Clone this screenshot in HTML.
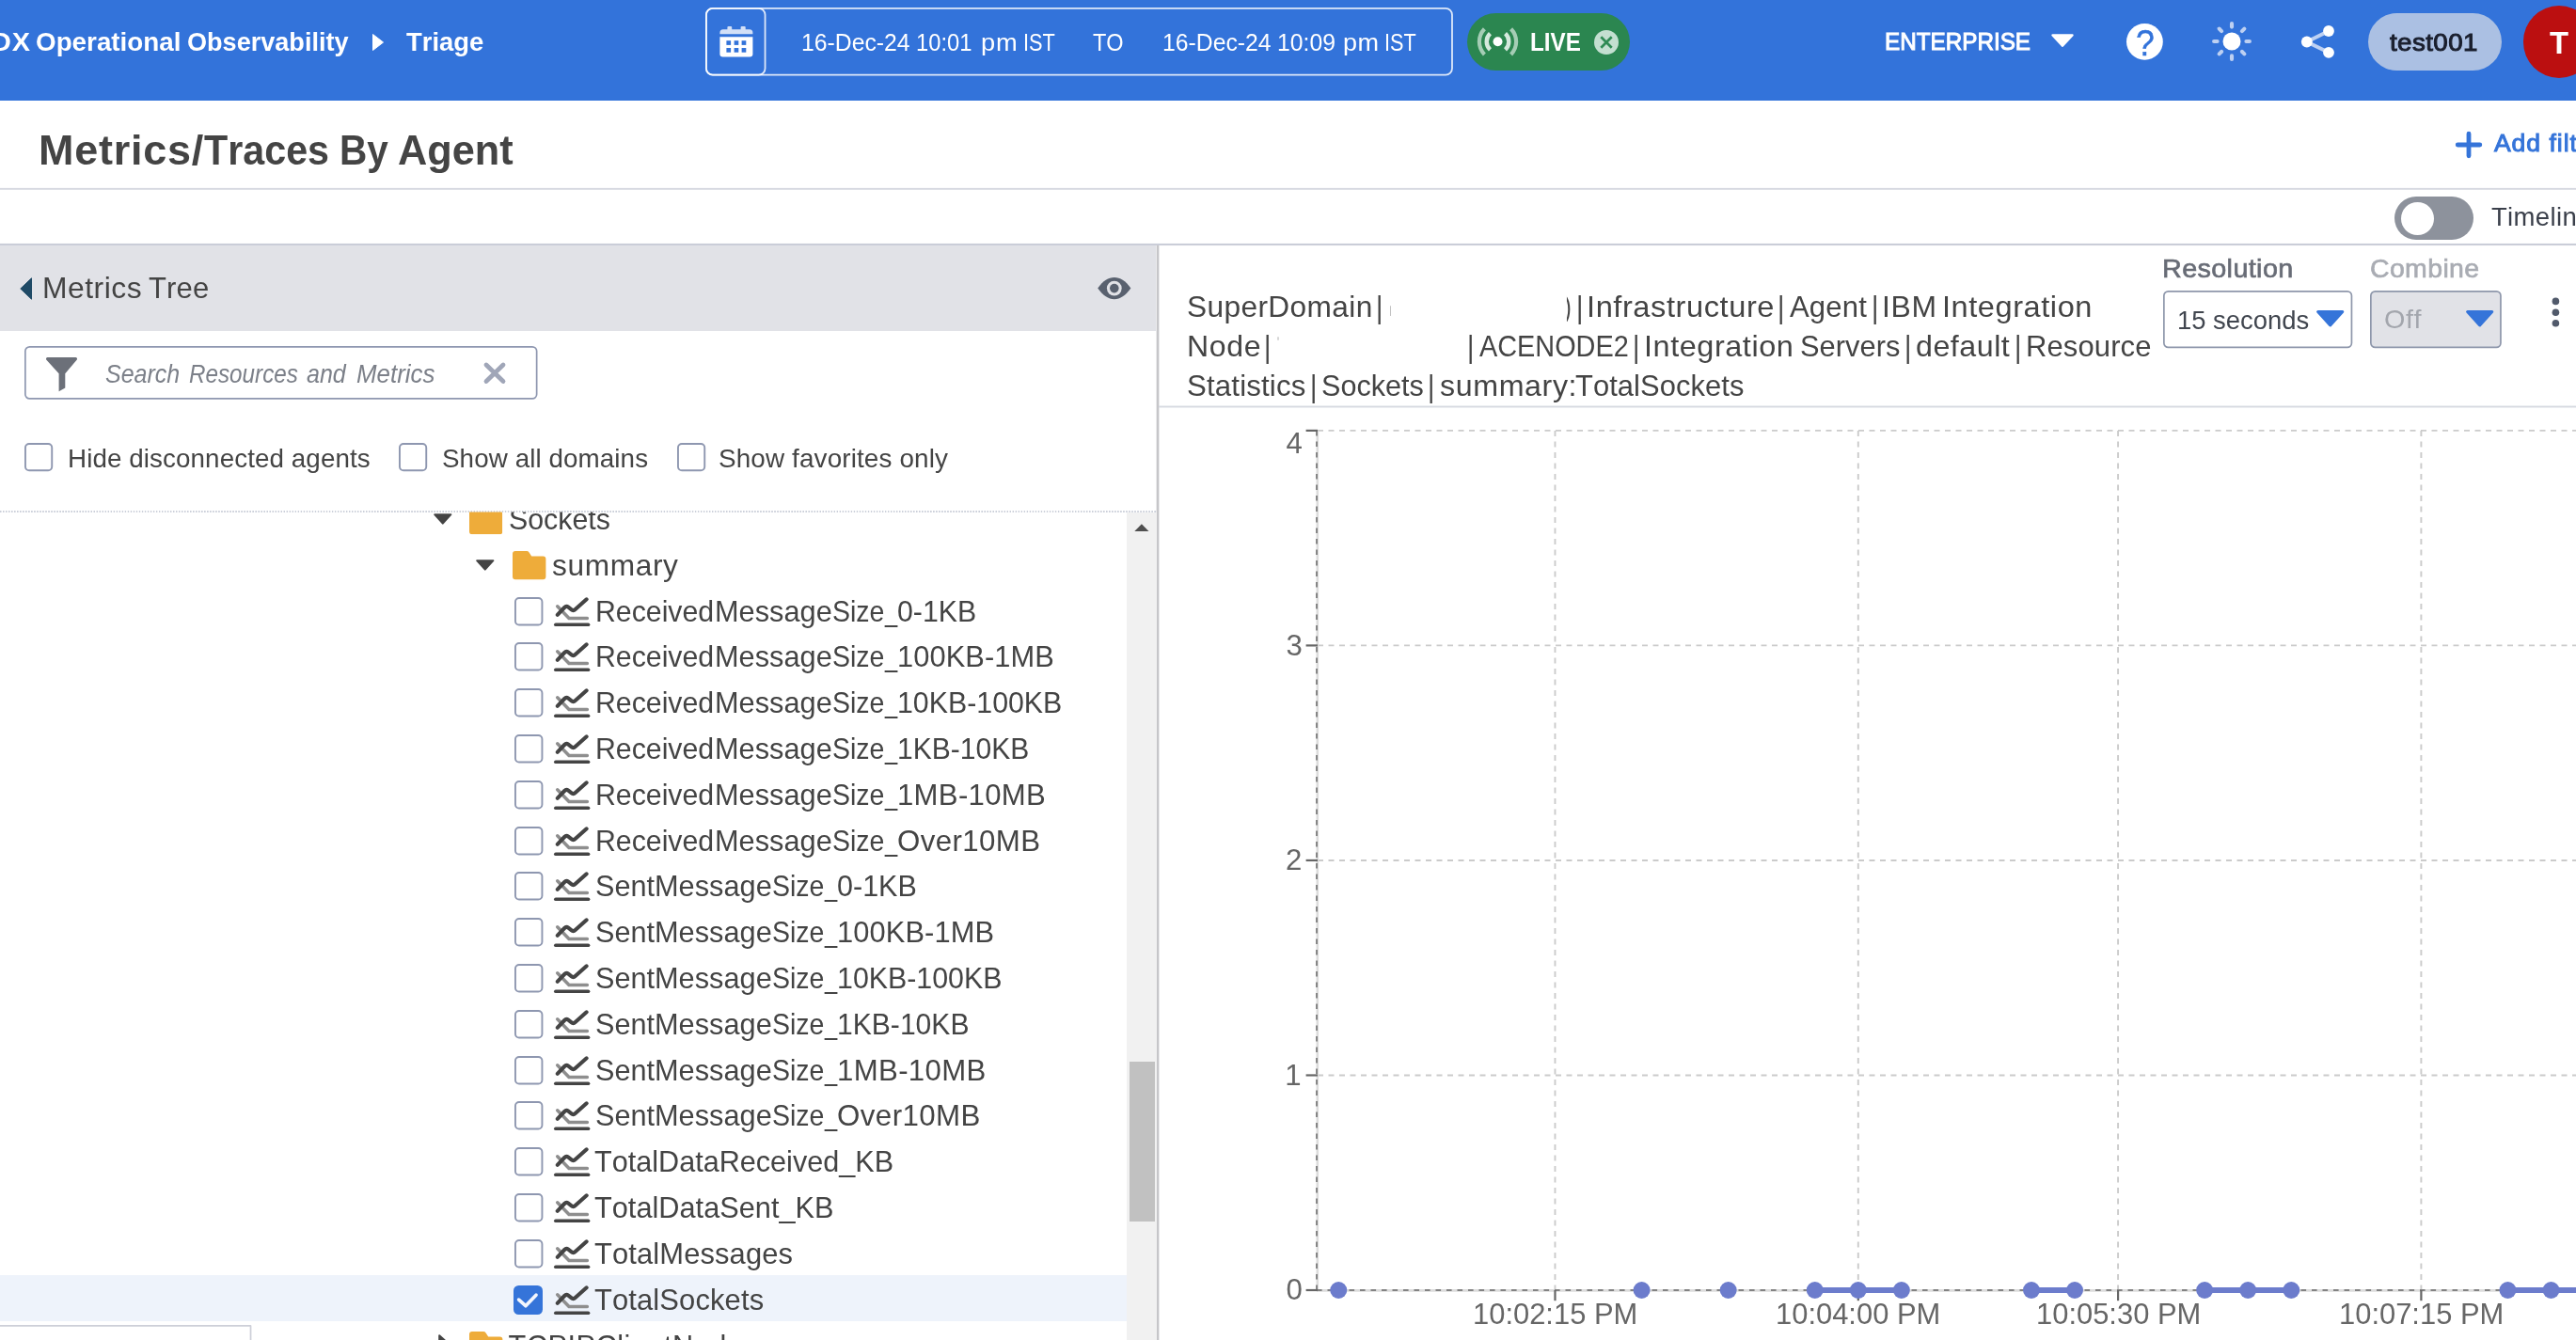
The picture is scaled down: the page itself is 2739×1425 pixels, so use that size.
<!DOCTYPE html>
<html><head><meta charset="utf-8"><title>Metrics/Traces By Agent</title>
<style>
html,body{margin:0;padding:0;background:#fff;}
body{width:2739px;height:1425px;overflow:hidden;font-family:"Liberation Sans",sans-serif;font-kerning:none;}
#root{will-change:transform;position:relative;width:2739px;height:1425px;overflow:hidden;background:#fff;}
.t{position:absolute;white-space:pre;line-height:1;transform-origin:0 0;}
svg{overflow:visible;}

</style></head>
<body>
<div id="root">
<div style="position:absolute;left:0px;top:0px;width:2739px;height:107.3px;background:#3373da;"></div>
<svg style="position:absolute;left:396px;top:36px;" width="12" height="18" viewBox="0 0 12 18"><path d="M0.5 0.5 L11.5 9 L0.5 17.5 Z" fill="#fff" stroke="#fff" stroke-width="1" stroke-linejoin="round"/></svg>
<svg style="position:absolute;left:750.1px;top:8.0px;" width="794.90" height="72.50" viewBox="0 0 794.90 72.50"><rect x="0.90" y="0.90" width="793.10" height="70.70" rx="6.90" fill="none" stroke="rgba(255,255,255,.84)" stroke-width="1.8"/></svg>
<svg style="position:absolute;left:750.1px;top:8.0px;" width="64.45" height="72.50" viewBox="0 0 64.45 72.50"><rect x="0.90" y="0.90" width="62.65" height="70.70" rx="6.90" fill="none" stroke="rgba(255,255,255,.84)" stroke-width="1.8"/></svg>
<svg style="position:absolute;left:764.5px;top:28px;" width="35.5" height="33" viewBox="0 0 35.5 33"><path d="M0.4 8.3 V6.8 a3.5 3.5 0 0 1 3.5 -3.5 H31.9 a3.5 3.5 0 0 1 3.5 3.5 V8.3 Z" fill="#d3e0f7"/><rect x="8.4" y="0" width="4.8" height="5.5" rx="1.1" fill="#d3e0f7"/><rect x="22.6" y="0" width="5.1" height="5.5" rx="1.1" fill="#d3e0f7"/><path d="M0.4 11.3 H35.4 V29.3 a3.2 3.2 0 0 1 -3.2 3.2 H3.6 a3.2 3.2 0 0 1 -3.2 -3.2 Z" fill="#fff"/><rect x="7.4" y="15.2" width="4.7" height="4.7" fill="#3373da"/><rect x="7.4" y="23.0" width="4.7" height="4.7" fill="#3373da"/><rect x="15.6" y="15.2" width="4.7" height="4.7" fill="#3373da"/><rect x="15.6" y="23.0" width="4.7" height="4.7" fill="#3373da"/><rect x="23.6" y="15.2" width="4.7" height="4.7" fill="#3373da"/><rect x="23.6" y="23.0" width="4.7" height="4.7" fill="#3373da"/></svg>
<div style="position:absolute;left:1560px;top:14px;width:173px;height:61px;background:#2b8650;border-radius:31px;"></div>
<svg style="position:absolute;left:1570px;top:23px;" width="45" height="44" viewBox="0 0 45 44"><circle cx="22.5" cy="21.3" r="5" fill="#fff"/><path d="M14.45 29.93 A11.8 11.8 0 0 1 14.45 12.67" fill="none" stroke="#d5e9dd" stroke-width="4.4"/><path d="M30.55 12.67 A11.8 11.8 0 0 1 30.55 29.93" fill="none" stroke="#d5e9dd" stroke-width="4.4"/><path d="M8.40 34.92 A19.6 19.6 0 0 1 8.40 7.68" fill="none" stroke="#a5cdb5" stroke-width="4.2"/><path d="M36.60 7.68 A19.6 19.6 0 0 1 36.60 34.92" fill="none" stroke="#a5cdb5" stroke-width="4.2"/></svg>
<svg style="position:absolute;left:1695px;top:32px;" width="26" height="26" viewBox="0 0 26 26"><circle cx="13" cy="13" r="13" fill="#c3dfd0"/><path d="M7.3 7.3 L18.7 18.7 M18.7 7.3 L7.3 18.7" stroke="#2e8a54" stroke-width="2.7"/></svg>
<svg style="position:absolute;left:2180.6px;top:36.2px;" width="24" height="14" viewBox="0 0 24 14"><path d="M1.5 1.5 H22.5 L12 12.8 Z" fill="#fff" stroke="#fff" stroke-width="2.4" stroke-linejoin="round"/></svg>
<svg style="position:absolute;left:2261.45px;top:25.2px;" width="38.8" height="38.8" viewBox="0 0 38.8 38.8"><circle cx="19.4" cy="19.4" r="19.4" fill="#fff"/></svg>
<svg style="position:absolute;left:2350.5px;top:22.3px;" width="44" height="44" viewBox="0 0 44 44"><circle cx="22" cy="22" r="9.5" fill="#fff"/><line x1="37.40" y1="22.00" x2="40.90" y2="22.00" stroke="#bdd0f2" stroke-width="4.1" stroke-linecap="round"/><line x1="32.89" y1="32.89" x2="35.36" y2="35.36" stroke="#bdd0f2" stroke-width="4.1" stroke-linecap="round"/><line x1="22.00" y1="37.40" x2="22.00" y2="40.90" stroke="#bdd0f2" stroke-width="4.1" stroke-linecap="round"/><line x1="11.11" y1="32.89" x2="8.64" y2="35.36" stroke="#bdd0f2" stroke-width="4.1" stroke-linecap="round"/><line x1="6.60" y1="22.00" x2="3.10" y2="22.00" stroke="#bdd0f2" stroke-width="4.1" stroke-linecap="round"/><line x1="11.11" y1="11.11" x2="8.64" y2="8.64" stroke="#bdd0f2" stroke-width="4.1" stroke-linecap="round"/><line x1="22.00" y1="6.60" x2="22.00" y2="3.10" stroke="#bdd0f2" stroke-width="4.1" stroke-linecap="round"/><line x1="32.89" y1="11.11" x2="35.36" y2="8.64" stroke="#bdd0f2" stroke-width="4.1" stroke-linecap="round"/></svg>
<svg style="position:absolute;left:2440px;top:22px;" width="48" height="46" viewBox="0 0 48 46"><path d="M36 11 L12.8 22.5 L36 33.8" fill="none" stroke="#bdd0f2" stroke-width="4" stroke-linejoin="round"/><circle cx="12.8" cy="22.5" r="5.9" fill="#fff"/><circle cx="36" cy="11" r="5.9" fill="#fff"/><circle cx="36" cy="33.8" r="5.9" fill="#fff"/></svg>
<div style="position:absolute;left:2518px;top:14px;width:142px;height:61px;background:#abc0e3;border-radius:31px;"></div>
<div style="position:absolute;left:2682.6px;top:6px;width:76.80000000000018px;height:76.8px;background:#bb0f10;border-radius:50%;"></div>
<svg style="position:absolute;left:2611px;top:140px;" width="28" height="28" viewBox="0 0 28 28"><path d="M14 2.2 V25.8 M2.2 14 H25.8" stroke="#3574d9" stroke-width="4.8" stroke-linecap="round"/></svg>
<svg style="position:absolute;left:0px;top:198px;" width="2739.00" height="5" viewBox="0 198 2739.00 5"><rect x="0" y="199.90" width="2739.00" height="1.9" fill="#d6d9e1"/></svg>
<div style="position:absolute;left:2545.5px;top:209.3px;width:84.5px;height:45.69999999999999px;background:#8d929c;border-radius:23px;"></div>
<div style="position:absolute;left:2553.4px;top:215.2px;width:34.79999999999973px;height:34.80000000000001px;background:#fff;border-radius:50%;"></div>
<svg style="position:absolute;left:0px;top:257px;" width="2739.00" height="6" viewBox="0 257 2739.00 6"><rect x="0" y="258.95" width="2739.00" height="2.1" fill="#cacdd8"/></svg>
<div style="position:absolute;left:0px;top:261px;width:1229.4px;height:91px;background:#e1e2e7;"></div>
<svg style="position:absolute;left:1228px;top:261px;" width="6" height="1164.00" viewBox="1228 0 6 1164.00"><rect x="1229.65" y="0" width="2.7" height="1164.00" fill="#c6c6c9"/></svg>
<svg style="position:absolute;left:21px;top:295px;" width="13" height="24" viewBox="0 0 13 24"><path d="M12.5 0.8 V23.2 L0.8 12 Z" fill="#1f4a66" stroke="#1f4a66" stroke-width="1" stroke-linejoin="round"/></svg>
<svg style="position:absolute;left:1166.5px;top:295px;" width="35.6" height="23.2" viewBox="0 0 35.6 23.2"><path d="M0.2 11.6 C6 3.5 11.5 0 17.8 0 C24.1 0 29.6 3.5 35.4 11.6 C29.6 19.7 24.1 23.2 17.8 23.2 C11.5 23.2 6 19.7 0.2 11.6 Z" fill="#59616f"/><circle cx="17.8" cy="11.6" r="7.9" fill="#e1e2e7"/><circle cx="17.8" cy="11.6" r="4.8" fill="#59616f"/></svg>
<svg style="position:absolute;left:26.25px;top:368.25px;" width="545.50" height="56.75" viewBox="0 0 545.50 56.75"><rect x="0.85" y="0.85" width="543.80" height="55.05" rx="4.65" fill="#fff" stroke="#8e97b0" stroke-width="1.7"/></svg>
<svg style="position:absolute;left:48.75px;top:379.5px;" width="33" height="36.3" viewBox="0 0 33 36.3"><path d="M1.6 0 H31.4 a1.6 1.6 0 0 1 1.2 2.7 L20.3 17.2 V32.6 L13.6 36.3 V17.2 L0.4 2.7 A1.6 1.6 0 0 1 1.6 0 Z" fill="#6c7079"/></svg>
<svg style="position:absolute;left:515px;top:386.25px;" width="22" height="21.5" viewBox="0 0 22 21.5"><path d="M2 2 L20 19.5 M20 2 L2 19.5" stroke="#a0a6b8" stroke-width="4.8" stroke-linecap="round"/></svg>
<svg style="position:absolute;left:26.25px;top:471.4px;" width="30.20" height="30.20" viewBox="0 0 30.20 30.20"><rect x="0.95" y="0.95" width="28.30" height="28.30" rx="4.05" fill="#fff" stroke="#8e97b0" stroke-width="1.9"/></svg>
<svg style="position:absolute;left:424.25px;top:471.4px;" width="30.20" height="30.20" viewBox="0 0 30.20 30.20"><rect x="0.95" y="0.95" width="28.30" height="28.30" rx="4.05" fill="#fff" stroke="#8e97b0" stroke-width="1.9"/></svg>
<svg style="position:absolute;left:720px;top:471.4px;" width="30.20" height="30.20" viewBox="0 0 30.20 30.20"><rect x="0.95" y="0.95" width="28.30" height="28.30" rx="4.05" fill="#fff" stroke="#8e97b0" stroke-width="1.9"/></svg>
<div style="position:absolute;left:0px;top:543px;width:1229.5px;height:2px;background-image:linear-gradient(90deg,#ccd0da 48%,transparent 48%);background-size:3.03px 2px;"></div>
<svg style="position:absolute;left:461px;top:546.3000000000001px;" width="19.6" height="11.8" viewBox="0 0 19.6 11.8"><path d="M1.2 1.2 H18.4 L9.8 10.6 Z" fill="#444" stroke="#444" stroke-width="2" stroke-linejoin="round"/></svg>
<svg style="position:absolute;left:498.8px;top:538.1px;clip-path:inset(6.5px 0 0 0);" width="35.4" height="30.2" viewBox="0 0 35.4 30.2"><path d="M3 0 H15 Q16.6 0 17.6 1.5 L20.2 5.6 H32.4 Q35.4 5.6 35.4 8.6 V27.2 Q35.4 30.2 32.4 30.2 H3 Q0 30.2 0 27.2 V3 Q0 0 3 0 Z" fill="#eeac3a"/></svg>
<svg style="position:absolute;left:506.2px;top:595.1px;" width="19.6" height="11.8" viewBox="0 0 19.6 11.8"><path d="M1.2 1.2 H18.4 L9.8 10.6 Z" fill="#444" stroke="#444" stroke-width="2" stroke-linejoin="round"/></svg>
<svg style="position:absolute;left:544.5px;top:586.0px;" width="35.4" height="30.2" viewBox="0 0 35.4 30.2"><path d="M3 0 H15 Q16.6 0 17.6 1.5 L20.2 5.6 H32.4 Q35.4 5.6 35.4 8.6 V27.2 Q35.4 30.2 32.4 30.2 H3 Q0 30.2 0 27.2 V3 Q0 0 3 0 Z" fill="#eeac3a"/></svg>
<svg style="position:absolute;left:546.6px;top:634.6px;" width="30.40" height="30.40" viewBox="0 0 30.40 30.40"><rect x="0.95" y="0.95" width="28.50" height="28.50" rx="4.05" fill="#fff" stroke="#8e97b0" stroke-width="1.9"/></svg>
<svg style="position:absolute;left:588.9px;top:634.6px;" width="38.4" height="32" viewBox="0 0 38.4 32"><path d="M1.9 29.25 H36.5" stroke="#444" stroke-width="3.7" stroke-linecap="round" fill="none"/><path d="M3.7 9.8 L16 22.5 H35.4" stroke="#8e8e8e" stroke-width="3.5" stroke-linecap="round" stroke-linejoin="round" fill="none"/><path d="M3.7 18.8 L11.2 11 Q13.1 9 15.3 10.7 L18.4 13.2 Q20.6 15 22.7 13.1 L34.7 2.3" stroke="#444" stroke-width="4.1" stroke-linecap="round" stroke-linejoin="round" fill="none"/></svg>
<svg style="position:absolute;left:546.6px;top:683.4px;" width="30.40" height="30.40" viewBox="0 0 30.40 30.40"><rect x="0.95" y="0.95" width="28.50" height="28.50" rx="4.05" fill="#fff" stroke="#8e97b0" stroke-width="1.9"/></svg>
<svg style="position:absolute;left:588.9px;top:683.4px;" width="38.4" height="32" viewBox="0 0 38.4 32"><path d="M1.9 29.25 H36.5" stroke="#444" stroke-width="3.7" stroke-linecap="round" fill="none"/><path d="M3.7 9.8 L16 22.5 H35.4" stroke="#8e8e8e" stroke-width="3.5" stroke-linecap="round" stroke-linejoin="round" fill="none"/><path d="M3.7 18.8 L11.2 11 Q13.1 9 15.3 10.7 L18.4 13.2 Q20.6 15 22.7 13.1 L34.7 2.3" stroke="#444" stroke-width="4.1" stroke-linecap="round" stroke-linejoin="round" fill="none"/></svg>
<svg style="position:absolute;left:546.6px;top:732.1999999999999px;" width="30.40" height="30.40" viewBox="0 0 30.40 30.40"><rect x="0.95" y="0.95" width="28.50" height="28.50" rx="4.05" fill="#fff" stroke="#8e97b0" stroke-width="1.9"/></svg>
<svg style="position:absolute;left:588.9px;top:732.1999999999999px;" width="38.4" height="32" viewBox="0 0 38.4 32"><path d="M1.9 29.25 H36.5" stroke="#444" stroke-width="3.7" stroke-linecap="round" fill="none"/><path d="M3.7 9.8 L16 22.5 H35.4" stroke="#8e8e8e" stroke-width="3.5" stroke-linecap="round" stroke-linejoin="round" fill="none"/><path d="M3.7 18.8 L11.2 11 Q13.1 9 15.3 10.7 L18.4 13.2 Q20.6 15 22.7 13.1 L34.7 2.3" stroke="#444" stroke-width="4.1" stroke-linecap="round" stroke-linejoin="round" fill="none"/></svg>
<svg style="position:absolute;left:546.6px;top:781.0px;" width="30.40" height="30.40" viewBox="0 0 30.40 30.40"><rect x="0.95" y="0.95" width="28.50" height="28.50" rx="4.05" fill="#fff" stroke="#8e97b0" stroke-width="1.9"/></svg>
<svg style="position:absolute;left:588.9px;top:781.0px;" width="38.4" height="32" viewBox="0 0 38.4 32"><path d="M1.9 29.25 H36.5" stroke="#444" stroke-width="3.7" stroke-linecap="round" fill="none"/><path d="M3.7 9.8 L16 22.5 H35.4" stroke="#8e8e8e" stroke-width="3.5" stroke-linecap="round" stroke-linejoin="round" fill="none"/><path d="M3.7 18.8 L11.2 11 Q13.1 9 15.3 10.7 L18.4 13.2 Q20.6 15 22.7 13.1 L34.7 2.3" stroke="#444" stroke-width="4.1" stroke-linecap="round" stroke-linejoin="round" fill="none"/></svg>
<svg style="position:absolute;left:546.6px;top:829.8px;" width="30.40" height="30.40" viewBox="0 0 30.40 30.40"><rect x="0.95" y="0.95" width="28.50" height="28.50" rx="4.05" fill="#fff" stroke="#8e97b0" stroke-width="1.9"/></svg>
<svg style="position:absolute;left:588.9px;top:829.8px;" width="38.4" height="32" viewBox="0 0 38.4 32"><path d="M1.9 29.25 H36.5" stroke="#444" stroke-width="3.7" stroke-linecap="round" fill="none"/><path d="M3.7 9.8 L16 22.5 H35.4" stroke="#8e8e8e" stroke-width="3.5" stroke-linecap="round" stroke-linejoin="round" fill="none"/><path d="M3.7 18.8 L11.2 11 Q13.1 9 15.3 10.7 L18.4 13.2 Q20.6 15 22.7 13.1 L34.7 2.3" stroke="#444" stroke-width="4.1" stroke-linecap="round" stroke-linejoin="round" fill="none"/></svg>
<svg style="position:absolute;left:546.6px;top:878.6px;" width="30.40" height="30.40" viewBox="0 0 30.40 30.40"><rect x="0.95" y="0.95" width="28.50" height="28.50" rx="4.05" fill="#fff" stroke="#8e97b0" stroke-width="1.9"/></svg>
<svg style="position:absolute;left:588.9px;top:878.6px;" width="38.4" height="32" viewBox="0 0 38.4 32"><path d="M1.9 29.25 H36.5" stroke="#444" stroke-width="3.7" stroke-linecap="round" fill="none"/><path d="M3.7 9.8 L16 22.5 H35.4" stroke="#8e8e8e" stroke-width="3.5" stroke-linecap="round" stroke-linejoin="round" fill="none"/><path d="M3.7 18.8 L11.2 11 Q13.1 9 15.3 10.7 L18.4 13.2 Q20.6 15 22.7 13.1 L34.7 2.3" stroke="#444" stroke-width="4.1" stroke-linecap="round" stroke-linejoin="round" fill="none"/></svg>
<svg style="position:absolute;left:546.6px;top:927.4px;" width="30.40" height="30.40" viewBox="0 0 30.40 30.40"><rect x="0.95" y="0.95" width="28.50" height="28.50" rx="4.05" fill="#fff" stroke="#8e97b0" stroke-width="1.9"/></svg>
<svg style="position:absolute;left:588.9px;top:927.4px;" width="38.4" height="32" viewBox="0 0 38.4 32"><path d="M1.9 29.25 H36.5" stroke="#444" stroke-width="3.7" stroke-linecap="round" fill="none"/><path d="M3.7 9.8 L16 22.5 H35.4" stroke="#8e8e8e" stroke-width="3.5" stroke-linecap="round" stroke-linejoin="round" fill="none"/><path d="M3.7 18.8 L11.2 11 Q13.1 9 15.3 10.7 L18.4 13.2 Q20.6 15 22.7 13.1 L34.7 2.3" stroke="#444" stroke-width="4.1" stroke-linecap="round" stroke-linejoin="round" fill="none"/></svg>
<svg style="position:absolute;left:546.6px;top:976.1999999999999px;" width="30.40" height="30.40" viewBox="0 0 30.40 30.40"><rect x="0.95" y="0.95" width="28.50" height="28.50" rx="4.05" fill="#fff" stroke="#8e97b0" stroke-width="1.9"/></svg>
<svg style="position:absolute;left:588.9px;top:976.1999999999999px;" width="38.4" height="32" viewBox="0 0 38.4 32"><path d="M1.9 29.25 H36.5" stroke="#444" stroke-width="3.7" stroke-linecap="round" fill="none"/><path d="M3.7 9.8 L16 22.5 H35.4" stroke="#8e8e8e" stroke-width="3.5" stroke-linecap="round" stroke-linejoin="round" fill="none"/><path d="M3.7 18.8 L11.2 11 Q13.1 9 15.3 10.7 L18.4 13.2 Q20.6 15 22.7 13.1 L34.7 2.3" stroke="#444" stroke-width="4.1" stroke-linecap="round" stroke-linejoin="round" fill="none"/></svg>
<svg style="position:absolute;left:546.6px;top:1025.0px;" width="30.40" height="30.40" viewBox="0 0 30.40 30.40"><rect x="0.95" y="0.95" width="28.50" height="28.50" rx="4.05" fill="#fff" stroke="#8e97b0" stroke-width="1.9"/></svg>
<svg style="position:absolute;left:588.9px;top:1025.0px;" width="38.4" height="32" viewBox="0 0 38.4 32"><path d="M1.9 29.25 H36.5" stroke="#444" stroke-width="3.7" stroke-linecap="round" fill="none"/><path d="M3.7 9.8 L16 22.5 H35.4" stroke="#8e8e8e" stroke-width="3.5" stroke-linecap="round" stroke-linejoin="round" fill="none"/><path d="M3.7 18.8 L11.2 11 Q13.1 9 15.3 10.7 L18.4 13.2 Q20.6 15 22.7 13.1 L34.7 2.3" stroke="#444" stroke-width="4.1" stroke-linecap="round" stroke-linejoin="round" fill="none"/></svg>
<svg style="position:absolute;left:546.6px;top:1073.8000000000002px;" width="30.40" height="30.40" viewBox="0 0 30.40 30.40"><rect x="0.95" y="0.95" width="28.50" height="28.50" rx="4.05" fill="#fff" stroke="#8e97b0" stroke-width="1.9"/></svg>
<svg style="position:absolute;left:588.9px;top:1073.8000000000002px;" width="38.4" height="32" viewBox="0 0 38.4 32"><path d="M1.9 29.25 H36.5" stroke="#444" stroke-width="3.7" stroke-linecap="round" fill="none"/><path d="M3.7 9.8 L16 22.5 H35.4" stroke="#8e8e8e" stroke-width="3.5" stroke-linecap="round" stroke-linejoin="round" fill="none"/><path d="M3.7 18.8 L11.2 11 Q13.1 9 15.3 10.7 L18.4 13.2 Q20.6 15 22.7 13.1 L34.7 2.3" stroke="#444" stroke-width="4.1" stroke-linecap="round" stroke-linejoin="round" fill="none"/></svg>
<svg style="position:absolute;left:546.6px;top:1122.6px;" width="30.40" height="30.40" viewBox="0 0 30.40 30.40"><rect x="0.95" y="0.95" width="28.50" height="28.50" rx="4.05" fill="#fff" stroke="#8e97b0" stroke-width="1.9"/></svg>
<svg style="position:absolute;left:588.9px;top:1122.6px;" width="38.4" height="32" viewBox="0 0 38.4 32"><path d="M1.9 29.25 H36.5" stroke="#444" stroke-width="3.7" stroke-linecap="round" fill="none"/><path d="M3.7 9.8 L16 22.5 H35.4" stroke="#8e8e8e" stroke-width="3.5" stroke-linecap="round" stroke-linejoin="round" fill="none"/><path d="M3.7 18.8 L11.2 11 Q13.1 9 15.3 10.7 L18.4 13.2 Q20.6 15 22.7 13.1 L34.7 2.3" stroke="#444" stroke-width="4.1" stroke-linecap="round" stroke-linejoin="round" fill="none"/></svg>
<svg style="position:absolute;left:546.6px;top:1171.4px;" width="30.40" height="30.40" viewBox="0 0 30.40 30.40"><rect x="0.95" y="0.95" width="28.50" height="28.50" rx="4.05" fill="#fff" stroke="#8e97b0" stroke-width="1.9"/></svg>
<svg style="position:absolute;left:588.9px;top:1171.4px;" width="38.4" height="32" viewBox="0 0 38.4 32"><path d="M1.9 29.25 H36.5" stroke="#444" stroke-width="3.7" stroke-linecap="round" fill="none"/><path d="M3.7 9.8 L16 22.5 H35.4" stroke="#8e8e8e" stroke-width="3.5" stroke-linecap="round" stroke-linejoin="round" fill="none"/><path d="M3.7 18.8 L11.2 11 Q13.1 9 15.3 10.7 L18.4 13.2 Q20.6 15 22.7 13.1 L34.7 2.3" stroke="#444" stroke-width="4.1" stroke-linecap="round" stroke-linejoin="round" fill="none"/></svg>
<svg style="position:absolute;left:546.6px;top:1220.2px;" width="30.40" height="30.40" viewBox="0 0 30.40 30.40"><rect x="0.95" y="0.95" width="28.50" height="28.50" rx="4.05" fill="#fff" stroke="#8e97b0" stroke-width="1.9"/></svg>
<svg style="position:absolute;left:588.9px;top:1220.2px;" width="38.4" height="32" viewBox="0 0 38.4 32"><path d="M1.9 29.25 H36.5" stroke="#444" stroke-width="3.7" stroke-linecap="round" fill="none"/><path d="M3.7 9.8 L16 22.5 H35.4" stroke="#8e8e8e" stroke-width="3.5" stroke-linecap="round" stroke-linejoin="round" fill="none"/><path d="M3.7 18.8 L11.2 11 Q13.1 9 15.3 10.7 L18.4 13.2 Q20.6 15 22.7 13.1 L34.7 2.3" stroke="#444" stroke-width="4.1" stroke-linecap="round" stroke-linejoin="round" fill="none"/></svg>
<svg style="position:absolute;left:546.6px;top:1269.0px;" width="30.40" height="30.40" viewBox="0 0 30.40 30.40"><rect x="0.95" y="0.95" width="28.50" height="28.50" rx="4.05" fill="#fff" stroke="#8e97b0" stroke-width="1.9"/></svg>
<svg style="position:absolute;left:588.9px;top:1269.0px;" width="38.4" height="32" viewBox="0 0 38.4 32"><path d="M1.9 29.25 H36.5" stroke="#444" stroke-width="3.7" stroke-linecap="round" fill="none"/><path d="M3.7 9.8 L16 22.5 H35.4" stroke="#8e8e8e" stroke-width="3.5" stroke-linecap="round" stroke-linejoin="round" fill="none"/><path d="M3.7 18.8 L11.2 11 Q13.1 9 15.3 10.7 L18.4 13.2 Q20.6 15 22.7 13.1 L34.7 2.3" stroke="#444" stroke-width="4.1" stroke-linecap="round" stroke-linejoin="round" fill="none"/></svg>
<svg style="position:absolute;left:546.6px;top:1317.8000000000002px;" width="30.40" height="30.40" viewBox="0 0 30.40 30.40"><rect x="0.95" y="0.95" width="28.50" height="28.50" rx="4.05" fill="#fff" stroke="#8e97b0" stroke-width="1.9"/></svg>
<svg style="position:absolute;left:588.9px;top:1317.8000000000002px;" width="38.4" height="32" viewBox="0 0 38.4 32"><path d="M1.9 29.25 H36.5" stroke="#444" stroke-width="3.7" stroke-linecap="round" fill="none"/><path d="M3.7 9.8 L16 22.5 H35.4" stroke="#8e8e8e" stroke-width="3.5" stroke-linecap="round" stroke-linejoin="round" fill="none"/><path d="M3.7 18.8 L11.2 11 Q13.1 9 15.3 10.7 L18.4 13.2 Q20.6 15 22.7 13.1 L34.7 2.3" stroke="#444" stroke-width="4.1" stroke-linecap="round" stroke-linejoin="round" fill="none"/></svg>
<div style="position:absolute;left:0px;top:1355.8999999999999px;width:1198px;height:49.0px;background:#eef3fb;"></div>
<div style="position:absolute;left:546.4px;top:1366.6px;width:30.899999999999977px;height:31.299999999999955px;background:#3574d9;border-radius:5.5px;"></div>
<svg style="position:absolute;left:546.4px;top:1366.6px;" width="30.9" height="31.3" viewBox="0 0 30.9 31.3"><path d="M5.6 15.1 L12.9 21.7 L24 10.2" fill="none" stroke="#f3f6fd" stroke-width="3.7" stroke-linecap="round" stroke-linejoin="round"/></svg>
<svg style="position:absolute;left:588.9px;top:1366.6px;" width="38.4" height="32" viewBox="0 0 38.4 32"><path d="M1.9 29.25 H36.5" stroke="#444" stroke-width="3.7" stroke-linecap="round" fill="none"/><path d="M3.7 9.8 L16 22.5 H35.4" stroke="#8e8e8e" stroke-width="3.5" stroke-linecap="round" stroke-linejoin="round" fill="none"/><path d="M3.7 18.8 L11.2 11 Q13.1 9 15.3 10.7 L18.4 13.2 Q20.6 15 22.7 13.1 L34.7 2.3" stroke="#444" stroke-width="4.1" stroke-linecap="round" stroke-linejoin="round" fill="none"/></svg>
<svg style="position:absolute;left:465.5px;top:1418.9px;" width="11.8" height="19.6" viewBox="0 0 11.8 19.6"><path d="M1.2 1.2 V18.4 L10.6 9.8 Z" fill="#444" stroke="#444" stroke-width="2" stroke-linejoin="round"/></svg>
<svg style="position:absolute;left:498.8px;top:1415.6px;" width="35.4" height="30.2" viewBox="0 0 35.4 30.2"><path d="M3 0 H15 Q16.6 0 17.6 1.5 L20.2 5.6 H32.4 Q35.4 5.6 35.4 8.6 V27.2 Q35.4 30.2 32.4 30.2 H3 Q0 30.2 0 27.2 V3 Q0 0 3 0 Z" fill="#eeac3a"/></svg>
<div style="position:absolute;left:1198px;top:544.6px;width:31.5px;height:880.4px;background:#f1f1f1;"></div>
<svg style="position:absolute;left:1206.4px;top:556.6px;" width="15.8" height="8.4" viewBox="0 0 15.8 8.4"><path d="M7.9 0.3 L15.5 8.1 H0.3 Z" fill="#505050"/></svg>
<div style="position:absolute;left:1200.5px;top:1129px;width:27.5px;height:170px;background:#c1c1c1;"></div>
<svg style="position:absolute;left:-4px;top:1409.2px;" width="271.40" height="22.80" viewBox="0 0 271.40 22.80"><rect x="0.85" y="0.85" width="269.70" height="21.10" rx="0.15" fill="#fff" stroke="#cdcfd8" stroke-width="1.7"/></svg>
<div style="position:absolute;left:1477.5px;top:325px;width:1.7999999999999545px;height:11px;background:#999;border-radius:1px;opacity:.6;"></div>
<div style="position:absolute;left:1358px;top:358px;width:1.599999999999909px;height:4px;background:#bbb;border-radius:1px;opacity:.6;"></div>
<svg style="position:absolute;left:2300px;top:309.2px;" width="201.30" height="61.30" viewBox="0 0 201.30 61.30"><rect x="0.85" y="0.85" width="199.60" height="59.60" rx="4.65" fill="#fff" stroke="#8e97ab" stroke-width="1.7"/></svg>
<svg style="position:absolute;left:2463.4px;top:329.8px;" width="29.4" height="17.6" viewBox="0 0 29.4 17.6"><path d="M1.6 1.6 H27.8 L14.7 16 Z" fill="#3574d9" stroke="#3574d9" stroke-width="3" stroke-linejoin="round"/></svg>
<svg style="position:absolute;left:2520.3px;top:309.2px;" width="139.80" height="61.30" viewBox="0 0 139.80 61.30"><rect x="0.85" y="0.85" width="138.10" height="59.60" rx="4.65" fill="#e1e2e7" stroke="#8e97ab" stroke-width="1.7"/></svg>
<svg style="position:absolute;left:2621.9px;top:329.8px;" width="29.4" height="17.6" viewBox="0 0 29.4 17.6"><path d="M1.6 1.6 H27.8 L14.7 16 Z" fill="#3574d9" stroke="#3574d9" stroke-width="3" stroke-linejoin="round"/></svg>
<svg style="position:absolute;left:2713px;top:316px;" width="9" height="32" viewBox="0 0 9 32"><circle cx="4.4" cy="4.4" r="3.8" fill="#515a6b"/><circle cx="4.4" cy="16.2" r="3.8" fill="#515a6b"/><circle cx="4.4" cy="27.8" r="3.8" fill="#515a6b"/></svg>
<svg style="position:absolute;left:1232px;top:430px;" width="1507.00" height="5" viewBox="0 430 1507.00 5"><rect x="0" y="431.55" width="1507.00" height="1.9" fill="#d6d9e1"/></svg>
<svg style="position:absolute;left:1232px;top:433px;" width="1507" height="992" viewBox="1232 433 1507 992"><path d="M1401.0 1143.47 H2739" stroke="#cbcbcb" stroke-width="1.9" stroke-dasharray="6 5.5" fill="none"/><path d="M1401.0 914.95 H2739" stroke="#cbcbcb" stroke-width="1.9" stroke-dasharray="6 5.5" fill="none"/><path d="M1401.0 686.42 H2739" stroke="#cbcbcb" stroke-width="1.9" stroke-dasharray="6 5.5" fill="none"/><path d="M1401.0 457.90 H2739" stroke="#cbcbcb" stroke-width="1.9" stroke-dasharray="6 5.5" fill="none"/><path d="M1653.48 457.9 V1372.0" stroke="#cbcbcb" stroke-width="1.9" stroke-dasharray="6 5.5" fill="none"/><path d="M1975.80 457.9 V1372.0" stroke="#cbcbcb" stroke-width="1.9" stroke-dasharray="6 5.5" fill="none"/><path d="M2252.07 457.9 V1372.0" stroke="#cbcbcb" stroke-width="1.9" stroke-dasharray="6 5.5" fill="none"/><path d="M2574.39 457.9 V1372.0" stroke="#cbcbcb" stroke-width="1.9" stroke-dasharray="6 5.5" fill="none"/><path d="M1400.8 457.9 V1372.0" stroke="#dcdcdc" stroke-width="2.6" fill="none"/><path d="M1400.0 1372.3 H2739" stroke="#dcdcdc" stroke-width="2.8" fill="none"/><path d="M1400.0 457.9 V1372.0" stroke="#666" stroke-width="1.5" stroke-dasharray="5.6 5.9" fill="none"/><path d="M1400.0 1372.0 H2739" stroke="#666" stroke-width="1.6" stroke-dasharray="5.6 5.9" fill="none"/><path d="M1388.6 1372.00 H1401.0" stroke="#666" stroke-width="2.2" fill="none"/><path d="M1388.6 1143.47 H1401.0" stroke="#666" stroke-width="2.2" fill="none"/><path d="M1388.6 914.95 H1401.0" stroke="#666" stroke-width="2.2" fill="none"/><path d="M1388.6 686.42 H1401.0" stroke="#666" stroke-width="2.2" fill="none"/><path d="M1388.6 457.90 H1401.0" stroke="#666" stroke-width="2.2" fill="none"/><path d="M1653.48 1372.0 V1383.2" stroke="#666" stroke-width="2.2" fill="none"/><path d="M1975.80 1372.0 V1383.2" stroke="#666" stroke-width="2.2" fill="none"/><path d="M2252.07 1372.0 V1383.2" stroke="#666" stroke-width="2.2" fill="none"/><path d="M2574.39 1372.0 V1383.2" stroke="#666" stroke-width="2.2" fill="none"/><path d="M1929.75 1372.0 H2021.84" stroke="#6c7ccc" stroke-width="5.9" fill="none"/><path d="M2159.98 1372.0 H2206.02" stroke="#6c7ccc" stroke-width="5.9" fill="none"/><path d="M2344.16 1372.0 H2436.25" stroke="#6c7ccc" stroke-width="5.9" fill="none"/><path d="M2666.48 1372.0 H2835.31" stroke="#6c7ccc" stroke-width="5.9" fill="none"/><circle cx="1423.25" cy="1372.0" r="9" fill="#6c7ccc"/><circle cx="1745.57" cy="1372.0" r="9" fill="#6c7ccc"/><circle cx="1837.66" cy="1372.0" r="9" fill="#6c7ccc"/><circle cx="1929.75" cy="1372.0" r="9" fill="#6c7ccc"/><circle cx="1975.80" cy="1372.0" r="9" fill="#6c7ccc"/><circle cx="2021.84" cy="1372.0" r="9" fill="#6c7ccc"/><circle cx="2159.98" cy="1372.0" r="9" fill="#6c7ccc"/><circle cx="2206.02" cy="1372.0" r="9" fill="#6c7ccc"/><circle cx="2344.16" cy="1372.0" r="9" fill="#6c7ccc"/><circle cx="2390.21" cy="1372.0" r="9" fill="#6c7ccc"/><circle cx="2436.25" cy="1372.0" r="9" fill="#6c7ccc"/><circle cx="2666.48" cy="1372.0" r="9" fill="#6c7ccc"/><circle cx="2712.52" cy="1372.0" r="9" fill="#6c7ccc"/><circle cx="2758.57" cy="1372.0" r="9" fill="#6c7ccc"/></svg>
<span class="t" style="left:-9.33px;top:29.93px;font-size:28.2px;font-weight:bold;font-style:normal;color:#fff;letter-spacing:0.861px;transform:scaleX(1.0238);">DX</span>
<span class="t" style="left:38.46px;top:29.93px;font-size:28.2px;font-weight:bold;font-style:normal;color:#fff;transform:scaleX(0.9864);">Operational</span>
<span class="t" style="left:199.19px;top:29.93px;font-size:28.2px;font-weight:bold;font-style:normal;color:#fff;transform:scaleX(0.9605);">Observability</span>
<span class="t" style="left:432.49px;top:29.93px;font-size:28.2px;font-weight:bold;font-style:normal;color:#fff;transform:scaleX(0.9722);">Triage</span>
<span class="t" style="left:851.71px;top:32.08px;font-size:26.6px;font-weight:normal;font-style:normal;color:#fff;transform:scaleX(0.9311);">16-Dec-24</span>
<span class="t" style="left:974.09px;top:32.08px;font-size:26.6px;font-weight:normal;font-style:normal;color:#fff;transform:scaleX(0.8950);">10:01</span>
<span class="t" style="left:1042.94px;top:32.08px;font-size:26.6px;font-weight:normal;font-style:normal;color:#fff;letter-spacing:0.836px;transform:scaleX(1.0256);">pm</span>
<span class="t" style="left:1087.69px;top:32.08px;font-size:26.6px;font-weight:normal;font-style:normal;color:#fff;transform:scaleX(0.8170);">IST</span>
<span class="t" style="left:1162.47px;top:32.08px;font-size:26.6px;font-weight:normal;font-style:normal;color:#fff;transform:scaleX(0.8840);">TO</span>
<span class="t" style="left:1236.31px;top:32.08px;font-size:26.6px;font-weight:normal;font-style:normal;color:#fff;transform:scaleX(0.9311);">16-Dec-24</span>
<span class="t" style="left:1358.21px;top:32.08px;font-size:26.6px;font-weight:normal;font-style:normal;color:#fff;transform:scaleX(0.9308);">10:09</span>
<span class="t" style="left:1427.96px;top:32.08px;font-size:26.6px;font-weight:normal;font-style:normal;color:#fff;letter-spacing:0.548px;transform:scaleX(1.0166);">pm</span>
<span class="t" style="left:1472.20px;top:32.08px;font-size:26.6px;font-weight:normal;font-style:normal;color:#fff;transform:scaleX(0.8144);">IST</span>
<span class="t" style="left:1627.48px;top:31.91px;font-size:26.8px;font-weight:bold;font-style:normal;color:#fff;transform:scaleX(0.9044);">LIVE</span>
<span class="t" style="left:2003.51px;top:32.16px;font-size:25.8px;font-weight:normal;font-style:normal;color:#fff;transform:scaleX(0.9404);-webkit-text-stroke:1px;">ENTERPRISE</span>
<span class="t" style="left:2271.34px;top:26.61px;font-size:38.5px;font-weight:normal;font-style:normal;color:#3373da;transform:scaleX(0.9232);-webkit-text-stroke:0.45px;">?</span>
<span class="t" style="left:2540.98px;top:31.77px;font-size:26.5px;font-weight:normal;font-style:normal;color:#1a1f2e;letter-spacing:0.406px;transform:scaleX(1.0447);-webkit-text-stroke:1px;">test001</span>
<span class="t" style="left:2711.33px;top:29.04px;font-size:33.5px;font-weight:bold;font-style:normal;color:#fff;transform:scaleX(0.9781);">T</span>
<span class="t" style="left:41.29px;top:139.28px;font-size:43.5px;font-weight:bold;font-style:normal;color:#444;letter-spacing:0.748px;transform:scaleX(1.0336);">Metrics/</span>
<span class="t" style="left:217.34px;top:139.28px;font-size:43.5px;font-weight:bold;font-style:normal;color:#444;transform:scaleX(0.9485);">Traces</span>
<span class="t" style="left:360.69px;top:139.28px;font-size:43.5px;font-weight:bold;font-style:normal;color:#444;transform:scaleX(0.9320);">By</span>
<span class="t" style="left:422.92px;top:139.28px;font-size:43.5px;font-weight:bold;font-style:normal;color:#444;transform:scaleX(0.9956);">Agent</span>
<span class="t" style="left:2651.95px;top:139.37px;font-size:26.5px;font-weight:normal;font-style:normal;color:#3574d9;letter-spacing:1.0px;-webkit-text-stroke:1px;">Add filter</span>
<span class="t" style="left:2648.98px;top:217.22px;font-size:27.5px;font-weight:normal;font-style:normal;color:#3a3f4a;letter-spacing:0.35px;">Timeline</span>
<span class="t" style="left:44.89px;top:291.94px;font-size:30.9px;font-weight:normal;font-style:normal;color:#444;letter-spacing:0.477px;transform:scaleX(1.0308);">Metrics</span>
<span class="t" style="left:158.20px;top:291.94px;font-size:30.9px;font-weight:normal;font-style:normal;color:#444;letter-spacing:0.105px;transform:scaleX(1.0052);">Tree</span>
<span class="t" style="left:112.29px;top:384.31px;font-size:27.4px;font-weight:normal;font-style:italic;color:#7c8089;transform:scaleX(0.9131);">Search</span>
<span class="t" style="left:200.75px;top:384.31px;font-size:27.4px;font-weight:normal;font-style:italic;color:#7c8089;transform:scaleX(0.8848);">Resources</span>
<span class="t" style="left:325.84px;top:384.31px;font-size:27.4px;font-weight:normal;font-style:italic;color:#7c8089;transform:scaleX(0.9146);">and</span>
<span class="t" style="left:378.70px;top:384.31px;font-size:27.4px;font-weight:normal;font-style:italic;color:#7c8089;transform:scaleX(0.9452);">Metrics</span>
<span class="t" style="left:71.82px;top:473.64px;font-size:27.6px;font-weight:normal;font-style:normal;color:#444;letter-spacing:0.089px;transform:scaleX(1.0065);">Hide disconnected agents</span>
<span class="t" style="left:469.99px;top:473.64px;font-size:27.6px;font-weight:normal;font-style:normal;color:#444;letter-spacing:0.091px;transform:scaleX(1.0064);">Show all domains</span>
<span class="t" style="left:764.43px;top:473.64px;font-size:27.6px;font-weight:normal;font-style:normal;color:#444;letter-spacing:0.128px;transform:scaleX(1.0098);">Show favorites only</span>
<span class="t" style="left:541.12px;top:537.91px;font-size:30.7px;font-weight:normal;font-style:normal;color:#444;transform:scaleX(0.9890);clip-path:inset(6.7px 0 0 0);">Sockets</span>
<span class="t" style="left:587.12px;top:586.71px;font-size:30.7px;font-weight:normal;font-style:normal;color:#444;letter-spacing:0.626px;transform:scaleX(1.0309);">summary</span>
<span class="t" style="left:632.72px;top:635.51px;font-size:30.7px;font-weight:normal;font-style:normal;color:#444;transform:scaleX(0.9859);">Received</span>
<span class="t" style="left:759.98px;top:635.51px;font-size:30.7px;font-weight:normal;font-style:normal;color:#444;letter-spacing:0.021px;transform:scaleX(1.0010);">Message</span>
<span class="t" style="left:884.90px;top:635.51px;font-size:30.7px;font-weight:normal;font-style:normal;color:#444;transform:scaleX(0.9290);">Size</span>
<span class="t" style="left:940.56px;top:635.51px;font-size:30.7px;font-weight:normal;font-style:normal;color:#444;transform:scaleX(0.7715);">_</span>
<span class="t" style="left:953.60px;top:635.51px;font-size:30.7px;font-weight:normal;font-style:normal;color:#444;transform:scaleX(0.9871);">0-1KB</span>
<span class="t" style="left:632.72px;top:684.31px;font-size:30.7px;font-weight:normal;font-style:normal;color:#444;transform:scaleX(0.9859);">Received</span>
<span class="t" style="left:759.98px;top:684.31px;font-size:30.7px;font-weight:normal;font-style:normal;color:#444;letter-spacing:0.021px;transform:scaleX(1.0010);">Message</span>
<span class="t" style="left:884.90px;top:684.31px;font-size:30.7px;font-weight:normal;font-style:normal;color:#444;transform:scaleX(0.9290);">Size</span>
<span class="t" style="left:940.56px;top:684.31px;font-size:30.7px;font-weight:normal;font-style:normal;color:#444;transform:scaleX(0.7715);">_</span>
<span class="t" style="left:953.60px;top:684.31px;font-size:30.7px;font-weight:normal;font-style:normal;color:#444;letter-spacing:0.090px;transform:scaleX(1.0044);">100KB-1MB</span>
<span class="t" style="left:632.72px;top:733.11px;font-size:30.7px;font-weight:normal;font-style:normal;color:#444;transform:scaleX(0.9859);">Received</span>
<span class="t" style="left:759.98px;top:733.11px;font-size:30.7px;font-weight:normal;font-style:normal;color:#444;letter-spacing:0.021px;transform:scaleX(1.0010);">Message</span>
<span class="t" style="left:884.90px;top:733.11px;font-size:30.7px;font-weight:normal;font-style:normal;color:#444;transform:scaleX(0.9290);">Size</span>
<span class="t" style="left:940.56px;top:733.11px;font-size:30.7px;font-weight:normal;font-style:normal;color:#444;transform:scaleX(0.7715);">_</span>
<span class="t" style="left:953.60px;top:733.11px;font-size:30.7px;font-weight:normal;font-style:normal;color:#444;transform:scaleX(0.9880);">10KB-100KB</span>
<span class="t" style="left:632.72px;top:781.91px;font-size:30.7px;font-weight:normal;font-style:normal;color:#444;transform:scaleX(0.9859);">Received</span>
<span class="t" style="left:759.98px;top:781.91px;font-size:30.7px;font-weight:normal;font-style:normal;color:#444;letter-spacing:0.021px;transform:scaleX(1.0010);">Message</span>
<span class="t" style="left:884.90px;top:781.91px;font-size:30.7px;font-weight:normal;font-style:normal;color:#444;transform:scaleX(0.9290);">Size</span>
<span class="t" style="left:940.56px;top:781.91px;font-size:30.7px;font-weight:normal;font-style:normal;color:#444;transform:scaleX(0.7715);">_</span>
<span class="t" style="left:953.60px;top:781.91px;font-size:30.7px;font-weight:normal;font-style:normal;color:#444;transform:scaleX(0.9783);">1KB-10KB</span>
<span class="t" style="left:632.72px;top:830.71px;font-size:30.7px;font-weight:normal;font-style:normal;color:#444;transform:scaleX(0.9859);">Received</span>
<span class="t" style="left:759.98px;top:830.71px;font-size:30.7px;font-weight:normal;font-style:normal;color:#444;letter-spacing:0.021px;transform:scaleX(1.0010);">Message</span>
<span class="t" style="left:884.90px;top:830.71px;font-size:30.7px;font-weight:normal;font-style:normal;color:#444;transform:scaleX(0.9290);">Size</span>
<span class="t" style="left:940.56px;top:830.71px;font-size:30.7px;font-weight:normal;font-style:normal;color:#444;transform:scaleX(0.7715);">_</span>
<span class="t" style="left:953.60px;top:830.71px;font-size:30.7px;font-weight:normal;font-style:normal;color:#444;letter-spacing:0.305px;transform:scaleX(1.0143);">1MB-10MB</span>
<span class="t" style="left:632.72px;top:879.51px;font-size:30.7px;font-weight:normal;font-style:normal;color:#444;transform:scaleX(0.9859);">Received</span>
<span class="t" style="left:759.98px;top:879.51px;font-size:30.7px;font-weight:normal;font-style:normal;color:#444;letter-spacing:0.021px;transform:scaleX(1.0010);">Message</span>
<span class="t" style="left:884.90px;top:879.51px;font-size:30.7px;font-weight:normal;font-style:normal;color:#444;transform:scaleX(0.9290);">Size</span>
<span class="t" style="left:940.56px;top:879.51px;font-size:30.7px;font-weight:normal;font-style:normal;color:#444;transform:scaleX(0.7715);">_</span>
<span class="t" style="left:953.60px;top:879.51px;font-size:30.7px;font-weight:normal;font-style:normal;color:#444;letter-spacing:0.375px;transform:scaleX(1.0184);">Over10MB</span>
<span class="t" style="left:632.71px;top:928.31px;font-size:30.7px;font-weight:normal;font-style:normal;color:#444;transform:scaleX(0.9980);">Sent</span>
<span class="t" style="left:696.28px;top:928.31px;font-size:30.7px;font-weight:normal;font-style:normal;color:#444;letter-spacing:0.021px;transform:scaleX(1.0010);">Message</span>
<span class="t" style="left:821.20px;top:928.31px;font-size:30.7px;font-weight:normal;font-style:normal;color:#444;transform:scaleX(0.9290);">Size</span>
<span class="t" style="left:876.86px;top:928.31px;font-size:30.7px;font-weight:normal;font-style:normal;color:#444;transform:scaleX(0.7715);">_</span>
<span class="t" style="left:889.90px;top:928.31px;font-size:30.7px;font-weight:normal;font-style:normal;color:#444;transform:scaleX(0.9943);">0-1KB</span>
<span class="t" style="left:632.71px;top:977.11px;font-size:30.7px;font-weight:normal;font-style:normal;color:#444;transform:scaleX(0.9980);">Sent</span>
<span class="t" style="left:696.28px;top:977.11px;font-size:30.7px;font-weight:normal;font-style:normal;color:#444;letter-spacing:0.021px;transform:scaleX(1.0010);">Message</span>
<span class="t" style="left:821.20px;top:977.11px;font-size:30.7px;font-weight:normal;font-style:normal;color:#444;transform:scaleX(0.9290);">Size</span>
<span class="t" style="left:876.86px;top:977.11px;font-size:30.7px;font-weight:normal;font-style:normal;color:#444;transform:scaleX(0.7715);">_</span>
<span class="t" style="left:889.90px;top:977.11px;font-size:30.7px;font-weight:normal;font-style:normal;color:#444;letter-spacing:0.103px;transform:scaleX(1.0050);">100KB-1MB</span>
<span class="t" style="left:632.71px;top:1025.91px;font-size:30.7px;font-weight:normal;font-style:normal;color:#444;transform:scaleX(0.9980);">Sent</span>
<span class="t" style="left:696.28px;top:1025.91px;font-size:30.7px;font-weight:normal;font-style:normal;color:#444;letter-spacing:0.021px;transform:scaleX(1.0010);">Message</span>
<span class="t" style="left:821.20px;top:1025.91px;font-size:30.7px;font-weight:normal;font-style:normal;color:#444;transform:scaleX(0.9290);">Size</span>
<span class="t" style="left:876.86px;top:1025.91px;font-size:30.7px;font-weight:normal;font-style:normal;color:#444;transform:scaleX(0.7715);">_</span>
<span class="t" style="left:889.90px;top:1025.91px;font-size:30.7px;font-weight:normal;font-style:normal;color:#444;transform:scaleX(0.9891);">10KB-100KB</span>
<span class="t" style="left:632.71px;top:1074.71px;font-size:30.7px;font-weight:normal;font-style:normal;color:#444;transform:scaleX(0.9980);">Sent</span>
<span class="t" style="left:696.28px;top:1074.71px;font-size:30.7px;font-weight:normal;font-style:normal;color:#444;letter-spacing:0.021px;transform:scaleX(1.0010);">Message</span>
<span class="t" style="left:821.20px;top:1074.71px;font-size:30.7px;font-weight:normal;font-style:normal;color:#444;transform:scaleX(0.9290);">Size</span>
<span class="t" style="left:876.86px;top:1074.71px;font-size:30.7px;font-weight:normal;font-style:normal;color:#444;transform:scaleX(0.7715);">_</span>
<span class="t" style="left:889.90px;top:1074.71px;font-size:30.7px;font-weight:normal;font-style:normal;color:#444;transform:scaleX(0.9804);">1KB-10KB</span>
<span class="t" style="left:632.71px;top:1123.51px;font-size:30.7px;font-weight:normal;font-style:normal;color:#444;transform:scaleX(0.9980);">Sent</span>
<span class="t" style="left:696.28px;top:1123.51px;font-size:30.7px;font-weight:normal;font-style:normal;color:#444;letter-spacing:0.021px;transform:scaleX(1.0010);">Message</span>
<span class="t" style="left:821.20px;top:1123.51px;font-size:30.7px;font-weight:normal;font-style:normal;color:#444;transform:scaleX(0.9290);">Size</span>
<span class="t" style="left:876.86px;top:1123.51px;font-size:30.7px;font-weight:normal;font-style:normal;color:#444;transform:scaleX(0.7715);">_</span>
<span class="t" style="left:889.90px;top:1123.51px;font-size:30.7px;font-weight:normal;font-style:normal;color:#444;letter-spacing:0.340px;transform:scaleX(1.0159);">1MB-10MB</span>
<span class="t" style="left:632.71px;top:1172.31px;font-size:30.7px;font-weight:normal;font-style:normal;color:#444;transform:scaleX(0.9980);">Sent</span>
<span class="t" style="left:696.28px;top:1172.31px;font-size:30.7px;font-weight:normal;font-style:normal;color:#444;letter-spacing:0.021px;transform:scaleX(1.0010);">Message</span>
<span class="t" style="left:821.20px;top:1172.31px;font-size:30.7px;font-weight:normal;font-style:normal;color:#444;transform:scaleX(0.9290);">Size</span>
<span class="t" style="left:876.86px;top:1172.31px;font-size:30.7px;font-weight:normal;font-style:normal;color:#444;transform:scaleX(0.7715);">_</span>
<span class="t" style="left:889.90px;top:1172.31px;font-size:30.7px;font-weight:normal;font-style:normal;color:#444;letter-spacing:0.403px;transform:scaleX(1.0198);">Over10MB</span>
<span class="t" style="left:632.21px;top:1221.11px;font-size:30.7px;font-weight:normal;font-style:normal;color:#444;transform:scaleX(0.9972);">TotalDataReceived_KB</span>
<span class="t" style="left:632.21px;top:1269.91px;font-size:30.7px;font-weight:normal;font-style:normal;color:#444;letter-spacing:0.011px;transform:scaleX(1.0006);">TotalDataSent_KB</span>
<span class="t" style="left:632.21px;top:1318.71px;font-size:30.7px;font-weight:normal;font-style:normal;color:#444;letter-spacing:0.120px;transform:scaleX(1.0070);">TotalMessages</span>
<span class="t" style="left:632.21px;top:1367.51px;font-size:30.7px;font-weight:normal;font-style:normal;color:#444;letter-spacing:0.122px;transform:scaleX(1.0077);">TotalSockets</span>
<span class="t" style="left:540.61px;top:1417.01px;font-size:30.7px;font-weight:normal;font-style:normal;color:#444;letter-spacing:0.5px;">TCPIPClientNodes</span>
<span class="t" style="left:1262.26px;top:311.51px;font-size:30.7px;font-weight:normal;font-style:normal;color:#444;letter-spacing:0.370px;transform:scaleX(1.0311);">SuperDomain</span>
<span class="t" style="left:1463.32px;top:309.77px;font-size:33px;font-weight:normal;font-style:normal;color:#444;transform:scaleX(0.8580);">|</span>
<span class="t" style="left:1663.06px;top:311.51px;font-size:30.7px;font-weight:normal;font-style:normal;color:#444;transform:scaleX(0.7607);clip-path:inset(0 0 0 3.9px);">)</span>
<span class="t" style="left:1675.92px;top:309.77px;font-size:33px;font-weight:normal;font-style:normal;color:#444;transform:scaleX(0.8580);">|</span>
<span class="t" style="left:1686.79px;top:311.51px;font-size:30.7px;font-weight:normal;font-style:normal;color:#444;letter-spacing:0.533px;transform:scaleX(1.0625);">Infrastructure</span>
<span class="t" style="left:1889.92px;top:309.77px;font-size:33px;font-weight:normal;font-style:normal;color:#444;transform:scaleX(0.8580);">|</span>
<span class="t" style="left:1903.14px;top:311.51px;font-size:30.7px;font-weight:normal;font-style:normal;color:#444;letter-spacing:0.156px;transform:scaleX(1.0119);">Agent</span>
<span class="t" style="left:1989.72px;top:309.77px;font-size:33px;font-weight:normal;font-style:normal;color:#444;transform:scaleX(0.8580);">|</span>
<span class="t" style="left:2001.26px;top:311.51px;font-size:30.7px;font-weight:normal;font-style:normal;color:#444;letter-spacing:0.614px;transform:scaleX(1.0389);">IBM</span>
<span class="t" style="left:2065.20px;top:311.51px;font-size:30.7px;font-weight:normal;font-style:normal;color:#444;letter-spacing:0.532px;transform:scaleX(1.0603);">Integration</span>
<span class="t" style="left:1261.57px;top:354.01px;font-size:30.7px;font-weight:normal;font-style:normal;color:#444;letter-spacing:0.646px;transform:scaleX(1.0437);">Node</span>
<span class="t" style="left:1343.82px;top:352.27px;font-size:33px;font-weight:normal;font-style:normal;color:#444;transform:scaleX(0.8580);">|</span>
<span class="t" style="left:1560.32px;top:352.27px;font-size:33px;font-weight:normal;font-style:normal;color:#444;transform:scaleX(0.8580);">|</span>
<span class="t" style="left:1573.24px;top:354.01px;font-size:30.7px;font-weight:normal;font-style:normal;color:#444;transform:scaleX(0.9401);">ACENODE2</span>
<span class="t" style="left:1736.12px;top:352.27px;font-size:33px;font-weight:normal;font-style:normal;color:#444;transform:scaleX(0.8580);">|</span>
<span class="t" style="left:1747.90px;top:354.01px;font-size:30.7px;font-weight:normal;font-style:normal;color:#444;letter-spacing:0.510px;transform:scaleX(1.0578);">Integration</span>
<span class="t" style="left:1914.00px;top:354.01px;font-size:30.7px;font-weight:normal;font-style:normal;color:#444;letter-spacing:0.044px;transform:scaleX(1.0039);">Servers</span>
<span class="t" style="left:2025.32px;top:352.27px;font-size:33px;font-weight:normal;font-style:normal;color:#444;transform:scaleX(0.8580);">|</span>
<span class="t" style="left:2037.15px;top:354.01px;font-size:30.7px;font-weight:normal;font-style:normal;color:#444;letter-spacing:0.481px;transform:scaleX(1.0501);">default</span>
<span class="t" style="left:2142.32px;top:352.27px;font-size:33px;font-weight:normal;font-style:normal;color:#444;transform:scaleX(0.8580);">|</span>
<span class="t" style="left:2153.96px;top:354.01px;font-size:30.7px;font-weight:normal;font-style:normal;color:#444;letter-spacing:0.115px;transform:scaleX(1.0096);">Resource</span>
<span class="t" style="left:1262.28px;top:396.01px;font-size:30.7px;font-weight:normal;font-style:normal;color:#444;letter-spacing:0.154px;transform:scaleX(1.0176);">Statistics</span>
<span class="t" style="left:1392.57px;top:394.27px;font-size:33px;font-weight:normal;font-style:normal;color:#444;transform:scaleX(0.8580);">|</span>
<span class="t" style="left:1404.86px;top:396.01px;font-size:30.7px;font-weight:normal;font-style:normal;color:#444;transform:scaleX(0.9961);">Sockets</span>
<span class="t" style="left:1518.32px;top:394.27px;font-size:33px;font-weight:normal;font-style:normal;color:#444;transform:scaleX(0.8580);">|</span>
<span class="t" style="left:1531.10px;top:396.01px;font-size:30.7px;font-weight:normal;font-style:normal;color:#444;letter-spacing:0.581px;transform:scaleX(1.0488);">summary:</span>
<span class="t" style="left:1674.51px;top:396.01px;font-size:30.7px;font-weight:normal;font-style:normal;color:#444;letter-spacing:0.073px;transform:scaleX(1.0069);">TotalSockets</span>
<span class="t" style="left:2298.94px;top:272.34px;font-size:27.6px;font-weight:normal;font-style:normal;color:#686c76;letter-spacing:0.370px;transform:scaleX(1.0412);-webkit-text-stroke:0.65px;">Resolution</span>
<span class="t" style="left:2519.75px;top:272.34px;font-size:27.6px;font-weight:normal;font-style:normal;color:#a9acb3;letter-spacing:0.361px;transform:scaleX(1.0311);-webkit-text-stroke:0.65px;">Combine</span>
<span class="t" style="left:2314.71px;top:326.67px;font-size:27.8px;font-weight:normal;font-style:normal;color:#41464f;transform:scaleX(0.9859);">15 seconds</span>
<span class="t" style="left:2534.84px;top:326.47px;font-size:27.8px;font-weight:normal;font-style:normal;color:#a3a6ad;letter-spacing:0.603px;transform:scaleX(1.0349);">Off</span>
<span class="t" style="left:1367.48px;top:456.19px;font-size:31.2px;font-weight:normal;font-style:normal;color:#666;letter-spacing:0.671px;">4</span>
<span class="t" style="left:1367.41px;top:670.81px;font-size:31.2px;font-weight:normal;font-style:normal;color:#666;letter-spacing:0.600px;">3</span>
<span class="t" style="left:1367.03px;top:899.34px;font-size:31.2px;font-weight:normal;font-style:normal;color:#666;letter-spacing:1.179px;">2</span>
<span class="t" style="left:1366.22px;top:1127.86px;font-size:31.2px;font-weight:normal;font-style:normal;color:#666;letter-spacing:1.941px;">1</span>
<span class="t" style="left:1367.38px;top:1356.39px;font-size:31.2px;font-weight:normal;font-style:normal;color:#666;letter-spacing:0.478px;">0</span>
<span class="t" style="left:1565.92px;top:1382.29px;font-size:31.2px;font-weight:normal;font-style:normal;color:#666;transform:scaleX(0.9911);">10:02:15 PM</span>
<span class="t" style="left:1888.24px;top:1382.29px;font-size:31.2px;font-weight:normal;font-style:normal;color:#666;transform:scaleX(0.9911);">10:04:00 PM</span>
<span class="t" style="left:2164.51px;top:1382.29px;font-size:31.2px;font-weight:normal;font-style:normal;color:#666;transform:scaleX(0.9911);">10:05:30 PM</span>
<span class="t" style="left:2486.83px;top:1382.29px;font-size:31.2px;font-weight:normal;font-style:normal;color:#666;transform:scaleX(0.9911);">10:07:15 PM</span>
</div>
</body></html>
